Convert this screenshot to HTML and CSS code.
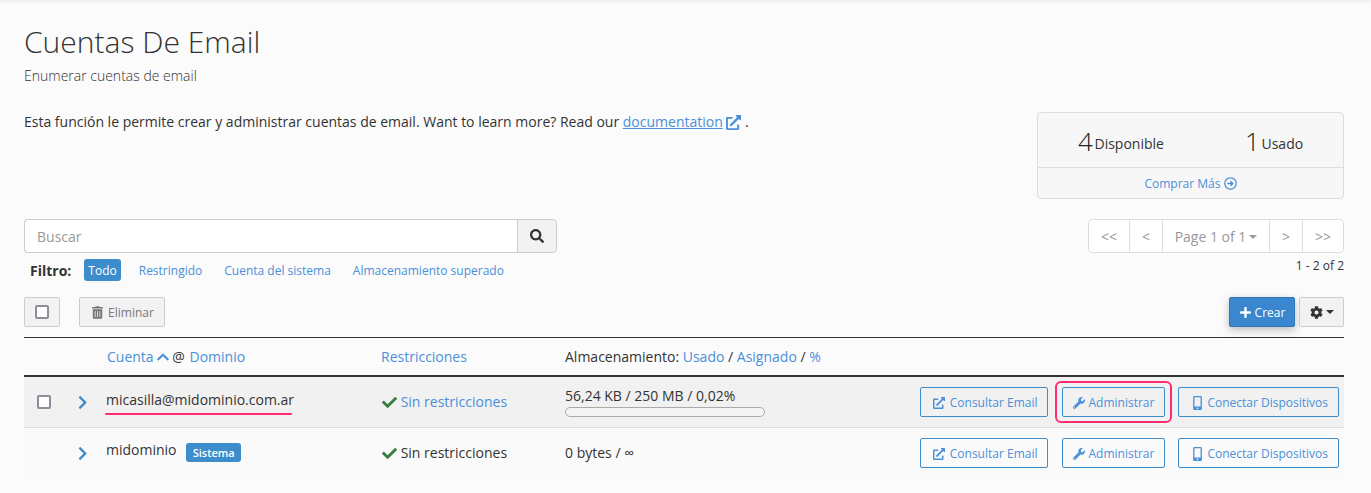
FILE: index.html
```html
<!DOCTYPE html>
<html lang="es">
<head>
<meta charset="utf-8">
<title>Cuentas De Email</title>
<link rel="stylesheet" href="styles.css">
</head>
<body>
<svg class="defs" aria-hidden="true">
  <symbol id="i-ext" viewBox="0 0 512 512"><path d="M432,320H400a16,16,0,0,0-16,16V448H64V128H208a16,16,0,0,0,16-16V80a16,16,0,0,0-16-16H48A48,48,0,0,0,0,112V464a48,48,0,0,0,48,48H400a48,48,0,0,0,48-48V336A16,16,0,0,0,432,320ZM488,0h-128c-21.37,0-32.05,25.91-17,41l35.73,35.73L135,320.37a24,24,0,0,0,0,34L157.67,377a24,24,0,0,0,34,0L435.28,133.32,471,169c15,15,41,4.5,41-17V24A24,24,0,0,0,488,0Z"/></symbol>
  <symbol id="i-search" viewBox="0 0 512 512"><path d="M505 442.7L405.3 343c-4.5-4.5-10.6-7-17-7H372c27.6-35.3 44-79.7 44-128C416 93.1 322.9 0 208 0S0 93.1 0 208s93.1 208 208 208c48.3 0 92.7-16.4 128-44v16.3c0 6.4 2.5 12.5 7 17l99.7 99.7c9.4 9.4 24.6 9.4 33.9 0l28.3-28.3c9.4-9.4 9.4-24.6.1-34zM208 336c-70.7 0-128-57.2-128-128 0-70.7 57.2-128 128-128 70.7 0 128 57.2 128 128 0 70.7-57.2 128-128 128z"/></symbol>
  <symbol id="i-trash" viewBox="0 0 448 512"><path d="M32 464a48 48 0 0 0 48 48h288a48 48 0 0 0 48-48V128H32zm272-256a16 16 0 0 1 32 0v224a16 16 0 0 1-32 0zm-96 0a16 16 0 0 1 32 0v224a16 16 0 0 1-32 0zm-96 0a16 16 0 0 1 32 0v224a16 16 0 0 1-32 0zM432 32H312l-9.4-18.7A24 24 0 0 0 281.1 0H166.8a23.72 23.72 0 0 0-21.4 13.3L136 32H16A16 16 0 0 0 0 48v32a16 16 0 0 0 16 16h416a16 16 0 0 0 16-16V48a16 16 0 0 0-16-16z"/></symbol>
  <symbol id="i-plus" viewBox="0 0 448 512"><path d="M416 208H272V64c0-17.67-14.33-32-32-32h-32c-17.67 0-32 14.33-32 32v144H32c-17.67 0-32 14.33-32 32v32c0 17.67 14.33 32 32 32h144v144c0 17.67 14.33 32 32 32h32c17.67 0 32-14.33 32-32V304h144c17.67 0 32-14.33 32-32v-32c0-17.67-14.33-32-32-32z"/></symbol>
  <symbol id="i-cog" viewBox="0 0 512 512"><path d="M487.4 315.7l-42.6-24.6c4.3-23.2 4.3-47 0-70.2l42.6-24.6c4.9-2.8 7.1-8.6 5.5-14-11.1-35.6-30-67.8-54.7-94.6-3.8-4.1-10-5.1-14.8-2.3L380.8 110c-17.9-15.4-38.5-27.3-60.8-35.1V25.8c0-5.6-3.9-10.5-9.4-11.7-36.7-8.2-74.3-7.8-109.2 0-5.5 1.2-9.4 6.1-9.4 11.7V75c-22.2 7.9-42.8 19.8-60.8 35.1L88.7 85.5c-4.9-2.8-11-1.9-14.8 2.3-24.7 26.7-43.6 58.9-54.7 94.6-1.7 5.4.6 11.2 5.5 14L67.3 221c-4.3 23.2-4.3 47 0 70.2l-42.6 24.6c-4.9 2.8-7.1 8.6-5.5 14 11.1 35.6 30 67.8 54.7 94.6 3.8 4.1 10 5.1 14.8 2.3l42.6-24.6c17.9 15.4 38.5 27.3 60.8 35.1v49.2c0 5.6 3.9 10.5 9.4 11.7 36.7 8.2 74.3 7.8 109.2 0 5.5-1.2 9.4-6.1 9.4-11.7v-49.2c22.2-7.9 42.8-19.8 60.8-35.1l42.6 24.6c4.9 2.8 11 1.9 14.8-2.3 24.7-26.7 43.6-58.9 54.7-94.6 1.5-5.5-.7-11.3-5.6-14.1zM256 336c-44.1 0-80-35.9-80-80s35.9-80 80-80 80 35.9 80 80-35.9 80-80 80z"/></symbol>
  <symbol id="i-wrench" viewBox="0 0 512 512"><path d="M507.73 109.1c-2.24-9.03-13.54-12.09-20.12-5.51l-74.36 74.36-67.88-11.31-11.31-67.88 74.36-74.36c6.62-6.62 3.43-17.9-5.66-20.16-47.38-11.74-99.55.91-136.58 37.93-39.64 39.64-50.55 97.1-34.05 147.2L18.74 402.76c-24.99 24.99-24.99 65.51 0 90.5 24.99 24.99 65.51 24.99 90.5 0l213.21-213.21c50.12 16.71 107.47 5.68 147.37-34.22 37.07-37.07 49.7-89.32 37.91-136.73zM64 472c-13.25 0-24-10.75-24-24 0-13.26 10.75-24 24-24s24 10.74 24 24c0 13.25-10.75 24-24 24z"/></symbol>
  <symbol id="i-mobile" viewBox="0 0 320 512"><path d="M272 0H48C21.5 0 0 21.5 0 48v416c0 26.5 21.5 48 48 48h224c26.5 0 48-21.5 48-48V48c0-26.5-21.5-48-48-48zM160 480c-17.7 0-32-14.3-32-32s14.3-32 32-32 32 14.3 32 32-14.3 32-32 32zm112-108c0 6.6-5.4 12-12 12H60c-6.6 0-12-5.4-12-12V60c0-6.6 5.4-12 12-12h200c6.6 0 12 5.4 12 12v312z"/></symbol>
  <symbol id="i-check" viewBox="0 0 512 512"><path d="M173.898 439.404l-166.4-166.4c-9.997-9.997-9.997-26.206 0-36.204l36.203-36.204c9.997-9.998 26.207-9.998 36.204 0L192 312.69 432.095 72.596c9.997-9.997 26.207-9.997 36.204 0l36.203 36.204c9.997 9.997 9.997 26.206 0 36.204l-294.4 294.401c-9.998 9.997-26.207 9.997-36.204-.001z"/></symbol>
  <symbol id="i-up" viewBox="0 0 448 512"><path d="M240.971 130.524l194.343 194.343c9.373 9.373 9.373 24.569 0 33.941l-22.667 22.667c-9.357 9.357-24.522 9.375-33.901.04L224 227.495 69.255 381.516c-9.379 9.335-24.544 9.317-33.901-.04l-22.667-22.667c-9.373-9.373-9.373-24.569 0-33.941L207.03 130.525c9.372-9.373 24.568-9.373 33.941-.001z"/></symbol>
  <symbol id="i-right" viewBox="0 0 320 512"><path d="M285.476 272.971L91.132 467.314c-9.373 9.373-24.569 9.373-33.941 0l-22.667-22.667c-9.357-9.357-9.375-24.522-.04-33.901L188.505 256 34.484 101.255c-9.335-9.379-9.317-24.544.04-33.901l22.667-22.667c9.373-9.373 24.569-9.373 33.941 0L285.475 239.03c9.373 9.372 9.373 24.568.001 33.941z"/></symbol>
  <symbol id="i-circle" viewBox="0 0 512 512"><path d="M504 256C504 119 393 8 256 8S8 119 8 256s111 248 248 248 248-111 248-248zm-448 0c0-110.5 89.5-200 200-200s200 89.5 200 200-89.5 200-200 200S56 366.5 56 256zm72 20v-40c0-6.6 5.4-12 12-12h116v-67c0-10.7 12.9-16 20.5-8.5l99 99c4.7 4.7 4.7 12.3 0 17l-99 99c-7.6 7.6-20.5 2.2-20.5-8.5v-67H140c-6.6 0-12-5.4-12-12z"/></symbol>
</svg>
<div class="topbar"></div>
<main class="page">
  <h1 class="title">Cuentas De Email</h1>
  <p class="subtitle">Enumerar cuentas de email</p>

  <section class="intro">
    <p class="intro-text">Esta función le permite crear y administrar cuentas de email. Want to learn more? Read our <a class="doc-link" href="#">documentation</a> <svg class="ico-doc"><use href="#i-ext"/></svg> .</p>
    <aside class="stats">
      <div class="stats-top">
        <div class="stat"><span class="stat-num">4</span> Disponible</div>
        <div class="stat"><span class="stat-num">1</span> Usado</div>
      </div>
      <a class="stats-more" href="#">Comprar Más <svg class="ico-more"><use href="#i-circle"/></svg></a>
    </aside>
  </section>

  <section class="search-row">
    <div class="search">
      <input class="search-input" type="text" placeholder="Buscar">
      <button class="search-btn" type="button"><svg class="ico-search"><use href="#i-search"/></svg></button>
    </div>
    <nav class="pager">
      <span class="pg">&lt;&lt;</span>
      <span class="pg">&lt;</span>
      <span class="pg pg-wide">Page 1 of 1<i class="caret"></i></span>
      <span class="pg">&gt;</span>
      <span class="pg">&gt;&gt;</span>
    </nav>
  </section>

  <section class="filter-row">
    <div class="filters">
      <b class="filter-label">Filtro:</b>
      <a class="chip chip-on" href="#">Todo</a>
      <a class="chip" href="#">Restringido</a>
      <a class="chip" href="#">Cuenta del sistema</a>
      <a class="chip" href="#">Almacenamiento superado</a>
    </div>
    <div class="count">1 - 2 of 2</div>
  </section>

  <section class="toolbar">
    <div class="tool-left">
      <span class="tool-check"><input class="check" type="checkbox"></span>
      <button class="btn-del" type="button"><svg class="ico-trash"><use href="#i-trash"/></svg> Eliminar</button>
    </div>
    <div class="tool-right">
      <button class="btn-new" type="button"><svg class="ico-plus"><use href="#i-plus"/></svg> Crear</button>
      <button class="btn-cog" type="button"><svg class="ico-cog"><use href="#i-cog"/></svg><i class="caret caret-dark"></i></button>
    </div>
  </section>

  <section class="table">
    <div class="row head">
      <div></div>
      <div></div>
      <div class="head-acc"><a href="#">Cuenta</a> <svg class="ico-up"><use href="#i-up"/></svg><span class="at">@</span> <a href="#">Dominio</a></div>
      <div><a href="#">Restricciones</a></div>
      <div>Almacenamiento: <a href="#">Usado</a> / <a href="#">Asignado</a> / <a href="#">%</a></div>
      <div></div>
    </div>

    <div class="row body alt">
      <div class="cell-check"><input class="check" type="checkbox"></div>
      <div class="cell-arrow"><svg class="ico-right"><use href="#i-right"/></svg></div>
      <div class="acc"><span class="acc-name marked">micasilla@midominio.com.ar</span></div>
      <div class="restr"><svg class="ico-check"><use href="#i-check"/></svg> <a href="#">Sin restricciones</a></div>
      <div class="store">
        <div class="store-text">56,24 KB / 250 MB / 0,02%</div>
        <div class="bar"></div>
      </div>
      <div class="actions">
        <a class="act" href="#"><svg class="ico-ext"><use href="#i-ext"/></svg> Consultar Email</a>
        <a class="act act-mark" href="#"><svg class="ico-wrench"><use href="#i-wrench"/></svg> Administrar</a>
        <a class="act" href="#"><svg class="ico-phone"><use href="#i-mobile"/></svg> Conectar Dispositivos</a>
      </div>
    </div>

    <div class="row body plain">
      <div class="cell-check"></div>
      <div class="cell-arrow"><svg class="ico-right"><use href="#i-right"/></svg></div>
      <div class="acc"><span class="acc-name">midominio</span> <span class="badge">Sistema</span></div>
      <div class="restr"><svg class="ico-check"><use href="#i-check"/></svg> Sin restricciones</div>
      <div class="store"><div class="store-text">0 bytes / ∞</div></div>
      <div class="actions">
        <a class="act" href="#"><svg class="ico-ext"><use href="#i-ext"/></svg> Consultar Email</a>
        <a class="act act-tight" href="#"><svg class="ico-wrench"><use href="#i-wrench"/></svg> Administrar</a>
        <a class="act" href="#"><svg class="ico-phone"><use href="#i-mobile"/></svg> Conectar Dispositivos</a>
      </div>
    </div>
  </section>
</main>
</body>
</html>
```
FILE: styles.css
```css
* { box-sizing: border-box; }
html, body { margin: 0; padding: 0; }
body {
  background: #fbfbfb;
  color: #333;
  font-family: "Open Sans", sans-serif;
  font-size: 14px;
  line-height: 20px;
  overflow: hidden;
}
a { color: #4a90d9; text-decoration: none; }
svg { fill: currentColor; }
.defs { display: none; }

.topbar { height: 1px; background: #f1f1f1; box-shadow: 0 1px 3px rgba(0,0,0,.12); }
.page { padding: 0 27px 0 24px; }

.title { margin: 0; padding-top: 20px; font-size: 30px; font-weight: 300; line-height: 41px; color: #333; }
.subtitle { margin: 4px 0 0; font-size: 14px; font-weight: 300; line-height: 20px; color: #333; }

.intro { display: flex; justify-content: space-between; align-items: flex-start; margin-top: 26px; }
.intro-text { margin: 0; line-height: 20px; }
.doc-link { text-decoration: underline; }
.ico-doc { width: 15px; height: 15px; color: #4a90d9; vertical-align: -3px; }

.stats { width: 307px; height: 87px; border: 1px solid #ddd; border-radius: 4px; background: #f7f7f7; display: flex; flex-direction: column; }
.stats-top { height: 55px; border-bottom: 1px solid #ddd; display: grid; grid-template-columns: 167px 1fr; align-items: center; padding: 4px 0 0 40px; }
.stat { font-size: 14px; line-height: 30px; white-space: nowrap; }
.stat-num { font-size: 26px; font-weight: 300; color: #222; vertical-align: -2px; margin-right: -2px; }
.stats-more { flex: 1; display: flex; align-items: center; justify-content: center; gap: 3px; padding-top: 1px; font-size: 12px; }
.ico-more { width: 13px; height: 13px; }

.search-row { display: flex; justify-content: space-between; margin-top: 20px; }
.search { display: flex; width: 533px; height: 34px; }
.search-input { flex: 1; min-width: 0; border: 1px solid #ccc; border-right: 0; border-radius: 4px 0 0 4px; background: #fff; padding: 0 12px; font: 14px "Open Sans", sans-serif; color: #333; outline: 0; }
.search-input::placeholder { color: #999; opacity: 1; }
.search-btn { width: 40px; border: 1px solid #ccc; border-radius: 0 4px 4px 0; background: #f2f2f2; padding: 0; display: flex; align-items: center; justify-content: center; color: #333; }
.ico-search { width: 14px; height: 14px; }

.pager { display: flex; height: 34px; border: 1px solid #ddd; border-radius: 4px; background: #fff; color: #999; }
.pg { display: flex; align-items: center; justify-content: center; width: 41px; padding-top: 1px; border-left: 1px solid #ddd; font-size: 14px; }
.pg:first-child { border-left: 0; width: 40px; }
.pg:nth-child(2), .pg:nth-child(4) { width: 33px; }
.pg-wide { width: 107px; }
.caret { display: inline-block; width: 0; height: 0; margin-left: 3px; border-top: 4px solid currentColor; border-left: 4px solid transparent; border-right: 4px solid transparent; }

.filter-row { display: flex; justify-content: space-between; align-items: flex-start; margin-top: 6px; }
.filters { display: flex; align-items: center; height: 22px; padding-left: 6px; font-size: 12px; }
.filter-label { font-size: 14px; font-weight: 700; margin-right: 13px; padding-top: 1px; }
.chip { padding: 1px 5px 0; line-height: 21px; border-radius: 3px; margin-right: 12px; }
.chip-on { background: #3d8ccb; color: #fff; margin-right: 13px; padding: 1px 4px 0; }
.count { font-size: 12px; line-height: 14px; color: #333; }

.toolbar { display: flex; justify-content: space-between; margin-top: 16px; height: 30px; }
.tool-left, .tool-right { display: flex; }
.tool-check { width: 36px; height: 30px; border: 1px solid #ccc; border-radius: 2px; background: #f2f2f2; display: flex; align-items: center; justify-content: center; margin-right: 19px; }
.check { appearance: none; margin: 0; width: 14px; height: 14px; border: 2px solid #8d8d9c; border-radius: 2px; background: #fff; display: block; }
.btn-del { width: 86px; border: 1px solid #ccc; border-radius: 2px; background: #f2f2f2; color: #777; padding: 0 0 0 2px; font: 12px "Open Sans", sans-serif; display: flex; align-items: center; justify-content: center; gap: 5px; }
.ico-trash { width: 11px; height: 13px; }
.btn-new { width: 66px; border: 1px solid #2f78b7; border-radius: 2px; background: #3a87cf; color: #fff; padding: 0 0 0 1px; font: 12px "Open Sans", sans-serif; display: flex; align-items: center; justify-content: center; gap: 4px; box-shadow: 0 3px 8px rgba(0,0,0,.25); margin-right: 4px; }
.ico-plus { width: 11px; height: 13px; }
.btn-cog { width: 45px; border: 1px solid #ccc; border-radius: 2px; background: #f2f2f2; padding: 0; color: #333; display: flex; align-items: center; justify-content: center; }
.ico-cog { width: 13px; height: 13px; }

.table { margin-top: 10px; border-top: 1px solid #333; }
.row { display: grid; grid-template-columns: 50px 32px 275px 184px 1fr auto; align-items: center; }
.head { height: 39px; border-bottom: 2px solid #333; }
.head a { color: #4a90d9; }
.head-acc { padding-left: 1px; }
.at { margin: 0 1px 0 3px; }
.ico-up { width: 12px; height: 14px; color: #4a90d9; vertical-align: -2px; }
.body { height: 51px; border-bottom: 1px solid #ddd; }
.body:last-child { height: 50px; border-bottom: 0; }
.alt { background: #f1f1f1; }
.plain { background: #fafafa; }
.cell-check { display: flex; justify-content: center; padding-right: 10px; }
.cell-arrow { display: flex; padding-left: 4px; color: #3d8ccb; }
.ico-right { width: 9.4px; height: 15px; }
.acc-name { position: relative; display: inline-block; }
.marked::after { content: ""; position: absolute; left: -1px; right: 2px; top: 23px; height: 2px; border-radius: 1px; background: #ff2d6f; }
.badge { display: inline-block; margin-left: 6px; padding: 0 6.5px; background: #3d8ccb; color: #fff; border-radius: 3px; font-size: 11px; font-weight: 600; line-height: 19px; vertical-align: -2px; }
.acc { padding-bottom: 4px; }
.ico-check { width: 15px; height: 15px; margin-left: 1px; color: #3a7d44; vertical-align: -3px; }
.store-text { line-height: 18px; }
.bar { width: 200px; height: 10px; margin-top: 2px; border: 1px solid #aaa; border-radius: 5px; background: #f4f4f4; }
.actions { display: flex; gap: 14px; padding-right: 5px; }
.act { position: relative; display: flex; align-items: center; justify-content: center; gap: 4px; height: 30px; padding: 1px 10px 0; border: 1px solid #3d8ccb; border-radius: 2px; font-size: 12px; color: #4a90d9; white-space: nowrap; }
.act-mark, .act-tight { gap: 3px; margin-right: -1px; }
.act-mark::after { content: ""; position: absolute; left: -8px; right: -8px; top: -7px; bottom: -7px; border: 2px solid #ff2d6f; border-radius: 6px; }
.ico-ext { width: 12px; height: 12px; margin: 0 1px 0 2px; }
.ico-wrench { width: 12px; height: 12px; }
.ico-phone { width: 9px; height: 14px; margin: 0 1px 0 4px; }
```
